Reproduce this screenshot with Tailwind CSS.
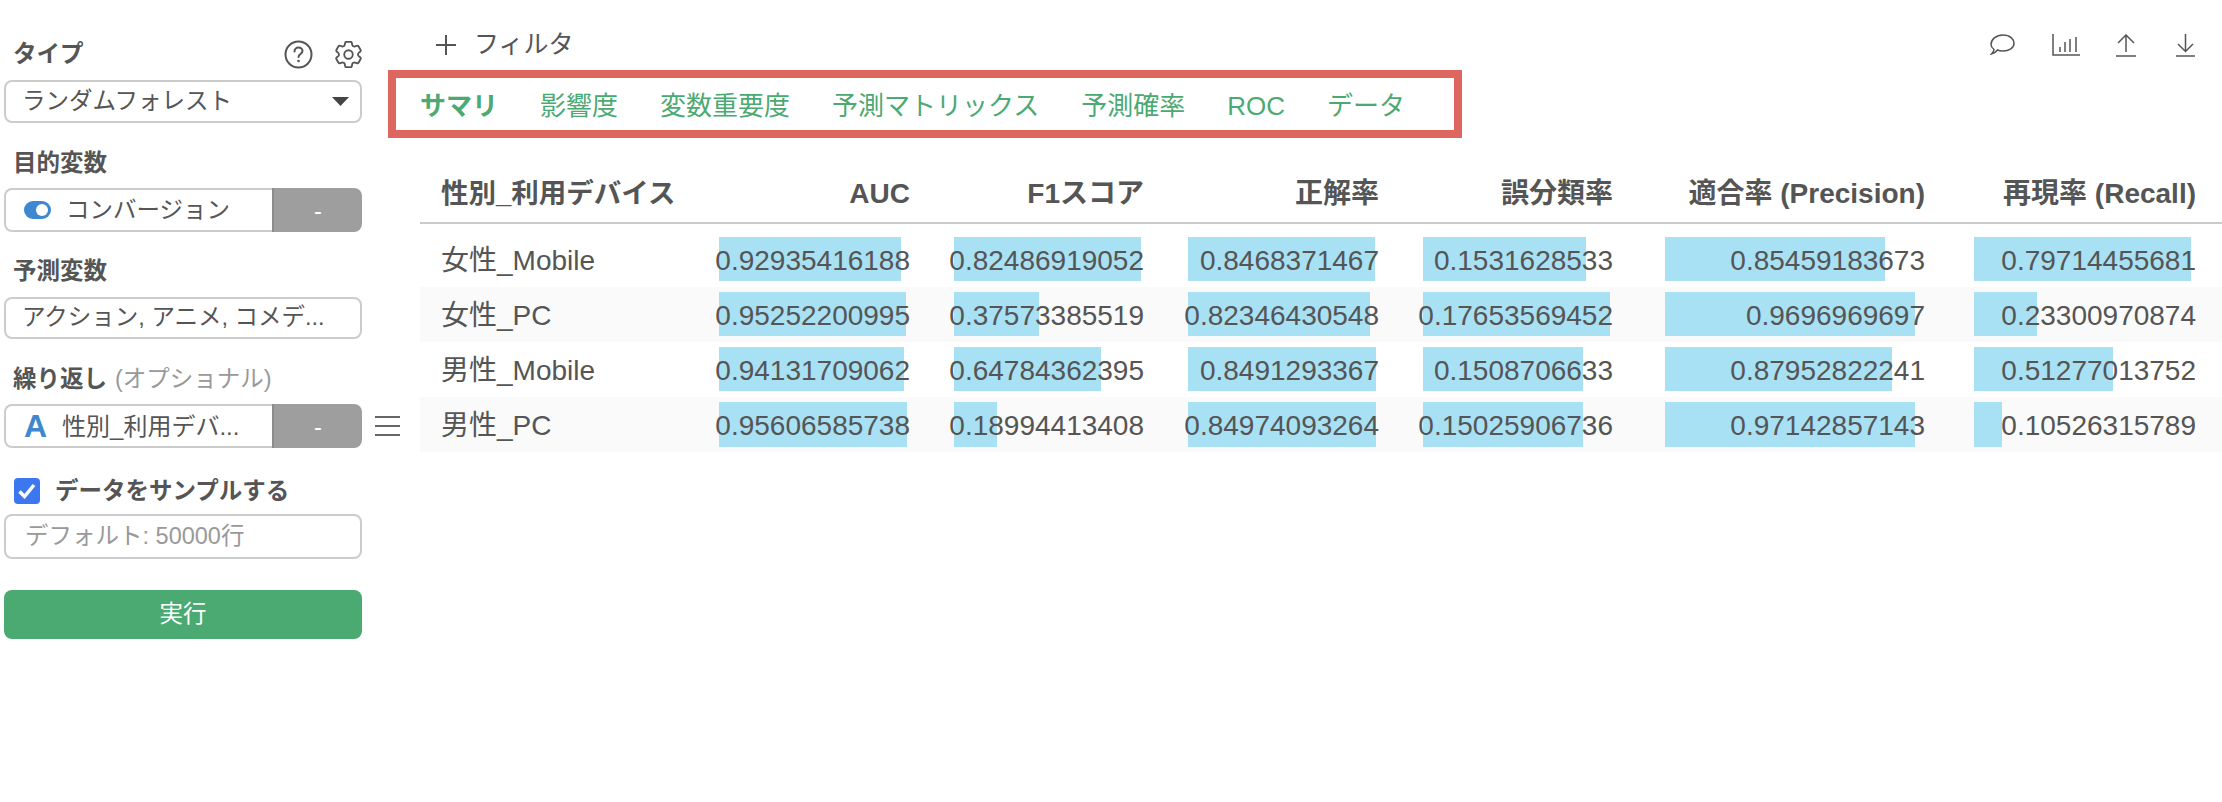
<!DOCTYPE html>
<html lang="ja">
<head>
    <meta charset="UTF-8">
    <title>サマリ</title>
    <script src="https://cdn.jsdelivr.net/npm/@tailwindcss/browser@4"></script>
</head>
<body class="bg-white text-[#555] flex h-[802px] overflow-hidden font-['Liberation_Sans','Noto_Sans_CJK_JP',sans-serif]">

    <!-- sidebar -->
    <aside class="w-[388px] shrink-0 pl-[4px] pt-[40px] text-[23.5px]">
        <div class="w-[358px] h-[28px] flex items-center pl-[9px]">
            <span class="font-bold pt-[2px]">タイプ</span>
            <svg class="ml-auto w-[29px] h-[29px]" viewBox="0 0 29 29" fill="none" stroke="#555" stroke-width="2"><circle cx="14.5" cy="14.5" r="13"/><path d="M10.5 11.5c0-2.400 1.800-4 4-4s4 1.500 4 3.500c0 3-4 3-4 6" stroke-linecap="round"/><circle cx="14.500" cy="21" r="1.300" fill="#555" stroke="none"/></svg>
            <svg class="ml-[22px] w-[27px] h-[27px]" viewBox="2.500 2.500 19 19" fill="none" stroke="#555" stroke-width="1.300"><path d="M9.594 3.940c.09-.542.56-.94 1.110-.94h2.593c.55 0 1.020.398 1.110.94l.213 1.281c.063.374.313.686.645.87.074.04.147.083.22.127.325.196.72.257 1.075.124l1.217-.456a1.125 1.125 0 0 1 1.370.49l1.296 2.247a1.125 1.125 0 0 1-.26 1.431l-1.003.827c-.293.241-.438.613-.43.992a7.723 7.723 0 0 1 0 .255c-.008.378.137.75.43.991l1.004.827c.424.35.534.955.26 1.430l-1.298 2.247a1.125 1.125 0 0 1-1.369.491l-1.217-.456c-.355-.133-.75-.072-1.076.124a6.470 6.470 0 0 1-.22.128c-.331.183-.581.495-.644.869l-.213 1.281c-.09.543-.56.94-1.110.94h-2.594c-.55 0-1.019-.398-1.110-.94l-.213-1.281c-.062-.374-.312-.686-.644-.87a6.520 6.520 0 0 1-.22-.127c-.325-.196-.72-.257-1.076-.124l-1.217.456a1.125 1.125 0 0 1-1.369-.49l-1.297-2.247a1.125 1.125 0 0 1 .26-1.431l1.004-.827c.292-.24.437-.613.43-.991a6.932 6.932 0 0 1 0-.255c.007-.38-.138-.751-.43-.992l-1.004-.827a1.125 1.125 0 0 1-.26-1.430l1.297-2.247a1.125 1.125 0 0 1 1.370-.491l1.216.456c.356.133.751.072 1.076-.124.072-.044.146-.086.22-.128.332-.183.582-.495.644-.869l.214-1.280Z"/><circle cx="12" cy="12" r="3"/></svg>
        </div>
        <div class="mt-[12px] w-[358px] h-[43px] border-2 border-[#ccc] rounded-[8px] flex items-center pl-[16px] pr-[11px]">
            <span>ランダムフォレスト</span>
            <svg class="ml-auto w-[17px] h-[9px]" viewBox="0 0 17 9"><path d="M0 0h17l-8.500 9z" fill="#444"/></svg>
        </div>

        <div class="mt-[27px] h-[28px] flex items-center pl-[9px] font-bold">目的変数</div>
        <div class="mt-[10px] w-[358px] h-[44px] flex">
            <div class="flex-1 border-2 border-r-0 border-[#ccc] rounded-l-[8px] flex items-center pl-[18px]">
                <span class="w-[27px] h-[18px] rounded-full bg-[#3d88d0] flex items-center justify-end pr-[3px]"><span class="w-[12px] h-[12px] rounded-full bg-white"></span></span>
                <span class="ml-[15px] pt-[1px]">コンバージョン</span>
            </div>
            <div class="w-[90px] bg-[#9e9e9e] border-l-2 border-[#8c8c8c] rounded-r-[8px] flex items-center justify-center text-white pt-[3px]">-</div>
        </div>

        <div class="mt-[26px] h-[28px] flex items-center pl-[9px] font-bold">予測変数</div>
        <div class="mt-[11px] w-[358px] h-[42px] border-2 border-[#ccc] rounded-[8px] flex items-center pl-[16px]">アクション, アニメ, コメデ...</div>

        <div class="mt-[26px] h-[28px] flex items-center pl-[9px] pt-[2px]"><span class="font-bold">繰り返し</span><span class="ml-[8px] text-[#999]">(オプショナル)</span></div>
        <div class="mt-[11px] flex items-center w-[396px]">
            <div class="w-[358px] h-[44px] flex shrink-0">
                <div class="flex-1 border-2 border-r-0 border-[#ccc] rounded-l-[8px] flex items-center pl-[18px]">
                    <span class="text-[#3d88d0] font-bold text-[32px] leading-none">A</span>
                    <span class="ml-[15px] pt-[1px] text-[24px]">性別_利用デバ...</span>
                </div>
                <div class="w-[90px] bg-[#9e9e9e] border-l-2 border-[#8c8c8c] rounded-r-[8px] flex items-center justify-center text-white pt-[3px]">-</div>
            </div>
            <svg class="ml-[13px] w-[25px] h-[20px] shrink-0" viewBox="0 0 25 20" stroke="#666" stroke-width="2"><path d="M0 1h25M0 10h25M0 19h25"/></svg>
        </div>

        <div class="mt-[29px] h-[28px] flex items-center pl-[10px]">
            <span class="w-[26px] h-[26px] rounded-[4px] bg-[#3b78f0] flex items-center justify-center">
                <svg class="w-[18px] h-[16px]" viewBox="0 0 18 16" fill="none" stroke="#fff" stroke-width="3.500"><path d="M1.500 8.500l5 5L16 2"/></svg>
            </span>
            <span class="ml-[15px] font-bold pt-[2px]">データをサンプルする</span>
        </div>
        <div class="mt-[9px] w-[358px] h-[45px] border-2 border-[#ccc] rounded-[8px] flex items-center pl-[19px] text-[#999]">デフォルト: 50000行</div>

        <button class="mt-[31px] w-[358px] h-[49px] bg-[#4ba972] rounded-[8px] text-white pt-[1px]">実行</button>
    </aside>

    <!-- main -->
    <main class="flex-1 min-w-0 pt-[33px]">
        <div class="h-[24px] flex items-center pl-[48px] pr-[27px] text-[25px]">
            <svg class="w-[20px] h-[20px]" viewBox="0 0 20 20" stroke="#555" stroke-width="2"><path d="M10 0v20M0 10h20"/></svg>
            <span class="ml-[18px]">フィルタ</span>
            <div class="ml-auto flex items-center">
                <svg class="w-[25px] h-[22px]" viewBox="0 0 25 22" fill="none" stroke="#555" stroke-width="1.500"><path d="M4 15.500C2 14 1 12.500 1 10.500 1 5.500 6 1 13 1s11 4 11 8.500S19 17 13 17c-2 0-4-.2-5.500-1-1.500 2-3.500 3.500-6 4 1.500-1.500 2.500-3 2.500-4.500z"/></svg>
                <svg class="ml-[37px] w-[28px] h-[22px]" viewBox="0 0 28 22" fill="none" stroke="#555" stroke-width="1.500"><path d="M1 0v21h27M8 13v5M13 8v10M18 5v13M24 3v15"/></svg>
                <svg class="ml-[36px] w-[20px] h-[23px]" viewBox="0 0 20 23" fill="none" stroke="#555" stroke-width="1.500"><path d="M10 1v17M2 9l8-8 8 8M0 22h20"/></svg>
                <svg class="ml-[40px] w-[19px] h-[23px]" viewBox="0 0 19 23" fill="none" stroke="#555" stroke-width="1.500"><path d="M9.500 0v17M2 10l7.500 7.500L17 10M0 22h19"/></svg>
            </div>
        </div>

        <div class="mt-[13px] w-[1074px] h-[68px] border-8 border-[#dd665e] flex items-center gap-[42px] pl-[24px] pt-[4px] text-[26px] text-[#4ba972]">
            <span class="font-bold">サマリ</span>
            <span>影響度</span>
            <span>変数重要度</span>
            <span>予測マトリックス</span>
            <span>予測確率</span>
            <span>ROC</span>
            <span>データ</span>
        </div>

        <div class="mt-[26px] pl-[32px]">
            <table class="table-fixed w-[1802px] text-[28px] text-right">
                <colgroup>
                    <col class="w-[280px]"><col class="w-[235px]"><col class="w-[235px]"><col class="w-[235px]"><col class="w-[234px]"><col class="w-[312px]"><col class="w-[271px]">
                </colgroup>
                <thead class="border-b-2 border-[#ccc]">
                    <tr class="h-[59px] font-bold">
                        <th class="text-left pl-[21px] pt-[2px] font-bold text-[27.5px]">性別_利用デバイス</th>
                        <th class="pr-[25px] pt-[2px] font-bold">AUC</th>
                        <th class="pr-[26px] pt-[2px] font-bold">F1スコア</th>
                        <th class="pr-[26px] pt-[2px] font-bold">正解率</th>
                        <th class="pr-[26px] pt-[2px] font-bold">誤分類率</th>
                        <th class="pr-[26px] pt-[2px] font-bold">適合率 (Precision)</th>
                        <th class="pr-[26px] pt-[2px] font-bold">再現率 (Recall)</th>
                    </tr>
                </thead>
                <tbody>
                    <tr class="h-[9px]"><td colspan="7"></td></tr>
                    <tr class="h-[55px]">
                        <td class="text-left pl-[21px] pt-[2px]">女性_Mobile</td>
                        <td class="relative pr-[25px] pt-[2px]"><div class="absolute left-[19px] top-[5px] bottom-[6px] bg-[#a8e0f4]" style="width:182px"></div><span class="relative">0.92935416188</span></td>
                        <td class="relative pr-[26px] pt-[2px]"><div class="absolute left-[19px] top-[5px] bottom-[6px] bg-[#a8e0f4]" style="width:187px"></div><span class="relative">0.82486919052</span></td>
                        <td class="relative pr-[26px] pt-[2px]"><div class="absolute left-[18px] top-[5px] bottom-[6px] bg-[#a8e0f4]" style="width:187px"></div><span class="relative">0.8468371467</span></td>
                        <td class="relative pr-[26px] pt-[2px]"><div class="absolute left-[18px] top-[5px] bottom-[6px] bg-[#a8e0f4]" style="width:163px"></div><span class="relative">0.1531628533</span></td>
                        <td class="relative pr-[26px] pt-[2px]"><div class="absolute left-[26px] top-[5px] bottom-[6px] bg-[#a8e0f4]" style="width:220px"></div><span class="relative">0.85459183673</span></td>
                        <td class="relative pr-[26px] pt-[2px]"><div class="absolute left-[23px] top-[5px] bottom-[6px] bg-[#a8e0f4]" style="width:217px"></div><span class="relative">0.79714455681</span></td>
                    </tr>
                    <tr class="h-[55px] bg-[#fafafa]">
                        <td class="text-left pl-[21px] pt-[2px]">女性_PC</td>
                        <td class="relative pr-[25px] pt-[2px]"><div class="absolute left-[19px] top-[5px] bottom-[6px] bg-[#a8e0f4]" style="width:187px"></div><span class="relative">0.95252200995</span></td>
                        <td class="relative pr-[26px] pt-[2px]"><div class="absolute left-[19px] top-[5px] bottom-[6px] bg-[#a8e0f4]" style="width:85px"></div><span class="relative">0.37573385519</span></td>
                        <td class="relative pr-[26px] pt-[2px]"><div class="absolute left-[18px] top-[5px] bottom-[6px] bg-[#a8e0f4]" style="width:182px"></div><span class="relative">0.82346430548</span></td>
                        <td class="relative pr-[26px] pt-[2px]"><div class="absolute left-[18px] top-[5px] bottom-[6px] bg-[#a8e0f4]" style="width:187px"></div><span class="relative">0.17653569452</span></td>
                        <td class="relative pr-[26px] pt-[2px]"><div class="absolute left-[26px] top-[5px] bottom-[6px] bg-[#a8e0f4]" style="width:250px"></div><span class="relative">0.9696969697</span></td>
                        <td class="relative pr-[26px] pt-[2px]"><div class="absolute left-[23px] top-[5px] bottom-[6px] bg-[#a8e0f4]" style="width:63px"></div><span class="relative">0.23300970874</span></td>
                    </tr>
                    <tr class="h-[55px]">
                        <td class="text-left pl-[21px] pt-[2px]">男性_Mobile</td>
                        <td class="relative pr-[25px] pt-[2px]"><div class="absolute left-[19px] top-[5px] bottom-[6px] bg-[#a8e0f4]" style="width:185px"></div><span class="relative">0.94131709062</span></td>
                        <td class="relative pr-[26px] pt-[2px]"><div class="absolute left-[19px] top-[5px] bottom-[6px] bg-[#a8e0f4]" style="width:147px"></div><span class="relative">0.64784362395</span></td>
                        <td class="relative pr-[26px] pt-[2px]"><div class="absolute left-[18px] top-[5px] bottom-[6px] bg-[#a8e0f4]" style="width:188px"></div><span class="relative">0.8491293367</span></td>
                        <td class="relative pr-[26px] pt-[2px]"><div class="absolute left-[18px] top-[5px] bottom-[6px] bg-[#a8e0f4]" style="width:160px"></div><span class="relative">0.1508706633</span></td>
                        <td class="relative pr-[26px] pt-[2px]"><div class="absolute left-[26px] top-[5px] bottom-[6px] bg-[#a8e0f4]" style="width:227px"></div><span class="relative">0.87952822241</span></td>
                        <td class="relative pr-[26px] pt-[2px]"><div class="absolute left-[23px] top-[5px] bottom-[6px] bg-[#a8e0f4]" style="width:139px"></div><span class="relative">0.51277013752</span></td>
                    </tr>
                    <tr class="h-[55px] bg-[#fafafa]">
                        <td class="text-left pl-[21px] pt-[2px]">男性_PC</td>
                        <td class="relative pr-[25px] pt-[2px]"><div class="absolute left-[19px] top-[5px] bottom-[5px] bg-[#a8e0f4]" style="width:188px"></div><span class="relative">0.95606585738</span></td>
                        <td class="relative pr-[26px] pt-[2px]"><div class="absolute left-[19px] top-[5px] bottom-[5px] bg-[#a8e0f4]" style="width:43px"></div><span class="relative">0.18994413408</span></td>
                        <td class="relative pr-[26px] pt-[2px]"><div class="absolute left-[18px] top-[5px] bottom-[5px] bg-[#a8e0f4]" style="width:188px"></div><span class="relative">0.84974093264</span></td>
                        <td class="relative pr-[26px] pt-[2px]"><div class="absolute left-[18px] top-[5px] bottom-[5px] bg-[#a8e0f4]" style="width:160px"></div><span class="relative">0.15025906736</span></td>
                        <td class="relative pr-[26px] pt-[2px]"><div class="absolute left-[26px] top-[5px] bottom-[5px] bg-[#a8e0f4]" style="width:250px"></div><span class="relative">0.97142857143</span></td>
                        <td class="relative pr-[26px] pt-[2px]"><div class="absolute left-[23px] top-[5px] bottom-[5px] bg-[#a8e0f4]" style="width:28px"></div><span class="relative">0.10526315789</span></td>
                    </tr>
                </tbody>
            </table>
        </div>
    </main>
</body>
</html>
